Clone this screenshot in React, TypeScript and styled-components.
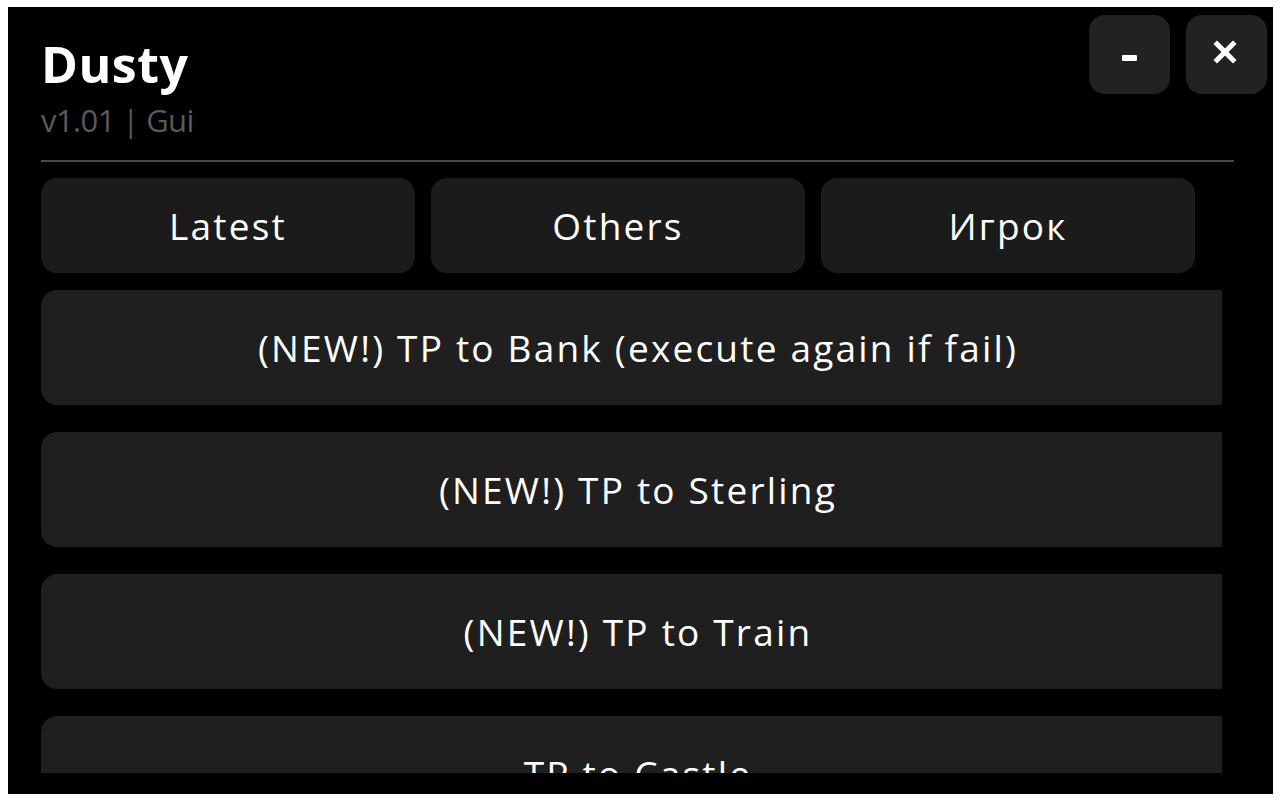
import React from "react";
import styled, { createGlobalStyle } from "styled-components";

const GlobalStyle = createGlobalStyle`
  html, body {
    margin: 0;
    padding: 0;
    background: #ffffff;
  }
  body {
    padding: 7px 7px 7px 8px;
    font-family: "Open Sans", "Noto Sans", sans-serif;
  }
`;

const Panel = styled.div`
  width: 1265px;
  height: 787px;
  background: #000000;
  display: flex;
  flex-direction: column;
  box-sizing: border-box;
  padding: 0 6px 0 33px;
  overflow: hidden;
`;

const Header = styled.div`
  display: flex;
  justify-content: space-between;
  align-items: flex-start;
  height: 153px;
`;

const TitleBlock = styled.div`
  display: flex;
  flex-direction: column;
  padding-top: 32px;
`;

const Title = styled.h1`
  margin: 0;
  color: #ffffff;
  font-size: 50px;
  font-weight: 700;
  line-height: 1;
  letter-spacing: 0.5px;
`;

const Subtitle = styled.div`
  margin-top: 16px;
  color: #5a5a5a;
  font-size: 31px;
  line-height: 1;
  letter-spacing: -0.6px;
`;

const Controls = styled.div`
  display: flex;
  gap: 16px;
  padding-top: 8px;
`;

const CtrlButton = styled.button`
  width: 81px;
  height: 79px;
  border: none;
  border-radius: 16px;
  background: #222222;
  display: flex;
  align-items: center;
  justify-content: center;
  padding: 0;
  cursor: pointer;
`;

const Dash = styled.span`
  display: block;
  width: 15px;
  height: 6px;
  background: #ffffff;
  border-radius: 1px;
  margin-top: 7px;
`;

const Divider = styled.div`
  width: 1193px;
  height: 2px;
  background: #4a4a4a;
`;

const Tabs = styled.div`
  display: grid;
  grid-template-columns: repeat(3, 374px);
  gap: 16px;
  margin-top: 16px;
`;

const Tab = styled.button`
  height: 95px;
  border: none;
  border-radius: 16px;
  background: #1b1b1b;
  color: #ffffff;
  font-family: "Open Sans", "Noto Sans", sans-serif;
  font-size: 37px;
  letter-spacing: 2.2px;
  cursor: pointer;
`;

const List = styled.div`
  width: 1181px;
  height: 483px;
  margin-top: 17px;
  overflow: hidden;
  display: flex;
  flex-direction: column;
  gap: 27px;
`;

const Action = styled.button`
  flex: none;
  width: 1194px;
  height: 115px;
  border: none;
  border-radius: 16px;
  background: #1f1f1f;
  color: #ffffff;
  font-family: "Open Sans", "Noto Sans", sans-serif;
  font-size: 37px;
  letter-spacing: 2.2px;
  cursor: pointer;
`;

const tabs = ["Latest", "Others", "Игрок"];
const actions = [
  "(NEW!) TP to Bank (execute again if fail)",
  "(NEW!) TP to Sterling",
  "(NEW!) TP to Train",
  "TP to Castle",
];

export default function App() {
  return (
    <>
      <GlobalStyle />
      <Panel>
        <Header>
          <TitleBlock>
            <Title>Dusty</Title>
            <Subtitle>v1.01 | Gui</Subtitle>
          </TitleBlock>
          <Controls>
            <CtrlButton aria-label="minimize">
              <Dash />
            </CtrlButton>
            <CtrlButton aria-label="close">
              <svg width="24" height="24" viewBox="0 0 24 24" style={{ marginTop: -6, marginLeft: -4 }}>
                <path
                  d="M4 4 L20 20 M20 4 L4 20"
                  stroke="#ffffff"
                  strokeWidth="5"
                  strokeLinecap="square"
                />
              </svg>
            </CtrlButton>
          </Controls>
        </Header>
        <Divider />
        <Tabs>
          {tabs.map((t) => (
            <Tab key={t}>{t}</Tab>
          ))}
        </Tabs>
        <List>
          {actions.map((a) => (
            <Action key={a}>{a}</Action>
          ))}
        </List>
      </Panel>
    </>
  );
}
